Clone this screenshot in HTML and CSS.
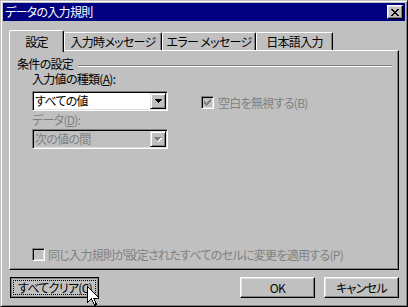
FILE: index.html
```html
<!DOCTYPE html>
<html lang="ja">
<head>
    <meta charset="UTF-8">
    <title>データの入力規則</title>
    <link rel="stylesheet" href="styles.css">
</head>
<body>
    <div class="window">
        <div class="titlebar">
            <span class="title">データの入力規則</span>
            <div class="close">
                <svg width="8" height="7" viewBox="0 0 8 7" shape-rendering="crispEdges"><path d="M0 0h2v1h-2zM6 0h2v1h-2zM1 1h2v1h-2zM5 1h2v1h-2zM2 2h4v1h-4zM3 3h2v1h-2zM2 4h4v1h-4zM1 5h2v1h-2zM5 5h2v1h-2zM0 6h2v1h-2zM6 6h2v1h-2z" fill="#000"/></svg>
            </div>
        </div>

        <div class="content">
            <div class="tabs">
                <div class="tab active" style="width:55px">設定</div>
                <div class="tab" style="width:98px">入力時メッセージ</div>
                <div class="tab" style="width:94px">エラー メッセージ</div>
                <div class="tab" style="width:77px">日本語入力</div>
            </div>

            <div class="panel">
                <div class="group-head">
                    <span>条件の設定</span>
                    <div class="etch"></div>
                </div>

                <div class="group-body">
                    <div class="col">
                        <div class="label">入力値の種類(<u>A</u>):</div>
                        <div class="combo">
                            <div class="combo-text">すべての値</div>
                            <div class="drop">
                                <svg width="7" height="4" viewBox="0 0 7 4" shape-rendering="crispEdges"><path d="M0 0h7v1h-7zM1 1h5v1h-5zM2 2h3v1h-3zM3 3h1v1h-1z" fill="#000"/></svg>
                            </div>
                        </div>
                        <div class="label label-2 disabled">データ(<u>D</u>):</div>
                        <div class="combo combo-off">
                            <div class="combo-text">次の値の間</div>
                            <div class="drop">
                                <svg width="8" height="5" viewBox="0 0 8 5" shape-rendering="crispEdges"><path d="M1 1h7v1h-7zM2 2h5v1h-5zM3 3h3v1h-3zM4 4h1v1h-1z" fill="#fff"/><path d="M0 0h7v1h-7zM1 1h5v1h-5zM2 2h3v1h-3zM3 3h1v1h-1z" fill="#808080"/></svg>
                            </div>
                        </div>
                    </div>

                    <div class="check check-blank disabled">
                        <div class="box">
                            <svg width="7" height="7" viewBox="0 0 7 7" shape-rendering="crispEdges"><path d="M6 0h1v1h-1zM5 1h2v1h-2zM0 2h1v1h-1zM4 2h3v1h-3zM0 3h2v1h-2zM3 3h3v1h-3zM0 4h5v1h-5zM1 5h3v1h-3zM2 6h1v1h-1z" fill="#808080"/></svg>
                        </div>
                        <span>空白を無視する(B)</span>
                    </div>
                </div>

                <div class="check check-all disabled">
                    <div class="box"></div>
                    <span>同じ入力規則が設定されたすべてのセルに変更を適用する(P)</span>
                </div>
            </div>

            <div class="buttons">
                <div class="btn btn-clear"><span class="focus">すべてクリア(C)</span></div>
                <div class="btn btn-ok">OK</div>
                <div class="btn">キャンセル</div>
            </div>
        </div>

        <svg class="cursor" width="12" height="20" viewBox="0 0 12 20" shape-rendering="crispEdges"><path d="M0.5 0.5v16l4-4 3 7 2-1-3-6.5h5.5z" fill="#fff" stroke="#000"/></svg>
    </div>
</body>
</html>
```

FILE: styles.css
```css
* {
    box-sizing: border-box;
}

body {
    margin: 0;
    width: 408px;
    height: 307px;
    overflow: hidden;
    background: #c0c0c0;
    font-family: "Noto Sans CJK JP", sans-serif;
    font-size: 12px;
    line-height: 14px;
    letter-spacing: -0.7px;
    font-feature-settings: "palt";
    color: #000;
}

.window {
    position: relative;
    width: 408px;
    height: 307px;
    padding: 2px;
    border: 1px solid;
    border-color: #c0c0c0 #000 #000 #c0c0c0;
    box-shadow: inset 1px 1px #fff, inset -1px -1px #808080;
    display: flex;
    flex-direction: column;
}

.titlebar {
    height: 18px;
    background: #000080;
    color: #fff;
    display: flex;
    align-items: center;
    justify-content: space-between;
    padding: 0 2px 0 2px;
}

.close {
    width: 16px;
    height: 14px;
    background: #c0c0c0;
    border: 1px solid;
    border-color: #fff #000 #000 #fff;
    box-shadow: inset -1px -1px #808080, inset 1px 1px #dfdfdf;
    display: flex;
    align-items: center;
    justify-content: center;
    padding-right: 1px;
}

.content {
    flex: 1;
    display: flex;
    flex-direction: column;
    padding: 9px 6px 0 6px;
}

.tabs {
    display: flex;
    align-items: flex-end;
    height: 20px;
}

.tab {
    height: 18px;
    padding-top: 2px;
    text-align: center;
    border: 1px solid;
    border-bottom: none;
    border-color: #fff #000 transparent #fff;
    border-radius: 2px 2px 0 0;
    box-shadow: inset -1px 0 #808080;
    white-space: nowrap;
}

.tab.active {
    position: relative;
    z-index: 1;
    height: 22px;
    margin-bottom: -2px;
    padding-top: 4px;
    background: #c0c0c0;
}

.panel {
    height: 220px;
    border: 1px solid;
    border-color: #fff #000 #000 #fff;
    box-shadow: inset -1px -1px #808080;
    padding: 6px 6px 0 7px;
    display: flex;
    flex-direction: column;
}

.group-head {
    display: flex;
    gap: 5px;
    height: 14px;
}

.etch {
    flex: 1;
    height: 2px;
    margin-top: 8px;
    border-top: 1px solid #808080;
    border-bottom: 1px solid #fff;
}

.group-body {
    display: flex;
    padding-left: 15px;
    margin-top: 1px;
}

.col {
    width: 136px;
    display: flex;
    flex-direction: column;
}

.label {
    height: 14px;
    white-space: nowrap;
    margin-bottom: 5px;
}

.label-2 {
    margin: 2px 0 2px 0;
}

.disabled {
    color: #808080;
}

.combo {
    height: 20px;
    display: flex;
    padding: 1px;
    border: 1px solid;
    border-color: #808080 #fff #fff #808080;
    box-shadow: inset 1px 1px #000, inset -1px -1px #dfdfdf;
    background: #fff;
}

.combo-text {
    flex: 1;
    line-height: 16px;
    padding-left: 1px;
    white-space: nowrap;
}

.combo-off {
    background: #c0c0c0;
    color: #808080;
}

.drop {
    width: 16px;
    height: 16px;
    background: #c0c0c0;
    border: 1px solid;
    border-color: #dfdfdf #000 #000 #dfdfdf;
    box-shadow: inset 1px 1px #fff, inset -1px -1px #808080;
    display: flex;
    align-items: center;
    justify-content: center;
}

.check {
    display: flex;
    align-items: center;
    height: 13px;
    gap: 4px;
    white-space: nowrap;
}

.check span {
    line-height: 13px;
}

.check-blank {
    margin: 24px 0 0 33px;
}

.check-all {
    margin: auto 0 8px 15px;
    gap: 3px;
}

.box {
    width: 13px;
    height: 13px;
    flex: none;
    border: 1px solid;
    border-color: #808080 #fff #fff #808080;
    box-shadow: inset 1px 1px #000, inset -1px -1px #dfdfdf;
    background: #c0c0c0;
    display: flex;
    align-items: center;
    justify-content: center;
}

.buttons {
    display: flex;
    margin-top: 7px;
    padding-left: 1px;
}

.btn {
    width: 75px;
    height: 21px;
    border: 1px solid;
    border-color: #fff #000 #000 #fff;
    box-shadow: inset -1px -1px #808080, inset 1px 1px #dfdfdf;
    display: flex;
    align-items: center;
    justify-content: center;
    white-space: nowrap;
}

.btn-clear {
    width: 89px;
    border-color: #000;
    box-shadow: inset 0 0 0 1px #808080;
    padding: 2px;
}

.btn-ok {
    margin-left: auto;
    margin-right: 9px;
}

.focus {
    flex: 1;
    align-self: stretch;
    outline: 1px dotted #000;
    outline-offset: -1px;
    display: flex;
    align-items: center;
    justify-content: center;
    padding: 1px 0 0 1px;
}

.cursor {
    position: absolute;
    left: 86px;
    top: 285px;
}
```
